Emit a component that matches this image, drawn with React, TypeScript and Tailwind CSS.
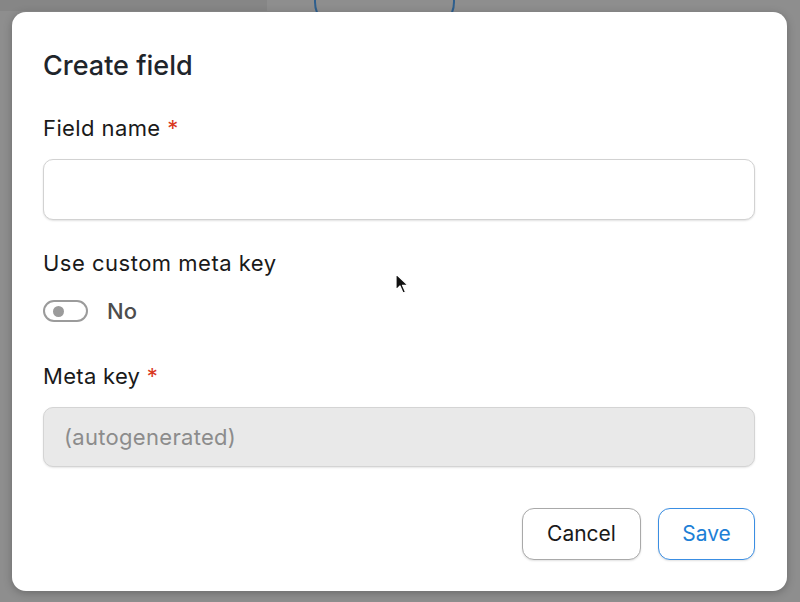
import React from "react";

export default function App() {
  return (
    <div
      className="relative w-[800px] h-[602px] overflow-hidden bg-[#8e8e8e] p-[12px] pr-[13px] pb-[11px]"
      style={{ fontFamily: "Inter, 'Noto Sans', sans-serif" }}
    >
      <div className="absolute left-0 top-0 w-[267px] h-[11px] bg-[#868686]" />
      <div className="absolute left-[314px] top-[-30px] w-[141px] h-[60px] rounded-[28px] border-2 border-[#2e5f8e]" />
      <div className="relative h-full rounded-[14px] bg-white shadow-[0_2px_8px_rgba(0,0,0,0.25)] pl-[31px] pr-[32px] pt-[38px] flex flex-col">
        <h1 className="text-[27px] leading-[32px] font-medium text-[#1f252b]">
          Create field
        </h1>
        <div className="mt-[33px] text-[22px] leading-[26px] text-[#1a1a1a] tracking-[0.4px]">
          Field name <span className="text-[#d9381e]">*</span>
        </div>
        <div className="mt-[18px] h-[61px] rounded-[10px] border border-[#d2d2d2] bg-white shadow-[0_1px_2px_rgba(0,0,0,0.12)]" />
        <div className="mt-[30px] text-[22px] leading-[26px] text-[#1a1a1a] tracking-[0.5px]">
          Use custom meta key
        </div>
        <div className="mt-[22px] flex items-center gap-[19px]">
          <div className="w-[45px] h-[22px] rounded-full border-2 border-[#9b9b9b] bg-white flex items-center pl-[8px]">
            <div className="w-[11px] h-[11px] rounded-full bg-[#9b9b9b]" />
          </div>
          <span className="text-[22px] leading-[26px] font-medium text-[#4d4d4d]">No</span>
        </div>
        <div className="mt-[39px] text-[22px] leading-[26px] text-[#1a1a1a] tracking-[0.3px]">
          Meta key <span className="text-[#d9381e]">*</span>
        </div>
        <div className="mt-[18px] h-[60px] rounded-[10px] border border-[#d4d4d4] bg-[#e9e9e9] shadow-[0_1px_2px_rgba(0,0,0,0.1)] flex items-center pl-[20px] text-[22px] tracking-[0.3px] text-[#8c8c8c]">
          (autogenerated)
        </div>
        <div className="mt-[41px] flex justify-end gap-[17px]">
          <button className="w-[119px] h-[52px] rounded-[12px] border border-[#a9a9a9] bg-white text-[21px] text-[#1a1a1a] shadow-[0_1px_2px_rgba(0,0,0,0.12)]">
            Cancel
          </button>
          <button className="w-[97px] h-[52px] rounded-[12px] border border-[#3a8ee3] bg-white text-[21px] text-[#1d7fd6] shadow-[0_1px_2px_rgba(0,0,0,0.12)]">
            Save
          </button>
        </div>
      </div>
      <svg className="absolute left-[395px] top-[273px]" width="14" height="22" viewBox="0 0 14 22">
        <path d="M1 1 L1 17 L5 13 L8 20 L10.5 19 L7.5 12.3 L13 12.3 Z" fill="#111" stroke="#fff" strokeWidth="1.2" strokeLinejoin="round" />
      </svg>
    </div>
  );
}
